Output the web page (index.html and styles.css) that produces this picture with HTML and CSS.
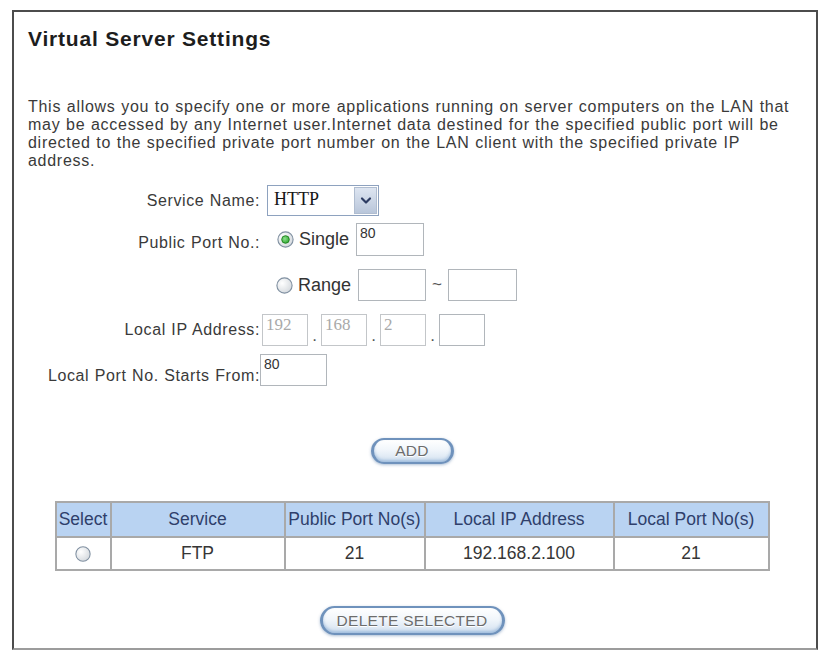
FILE: index.html
```html
<!DOCTYPE html>
<html lang="en">
<head>
<meta charset="utf-8">
<title>Virtual Server Settings</title>
<link rel="stylesheet" href="styles.css">
</head>
<body>
<div class="panel">
  <h1 class="title">Virtual Server Settings</h1>
  <p class="intro">This allows you to specify one or more applications running on server computers on the LAN that<br>may be accessed by any Internet user.Internet data destined for the specified public port will be<br>directed to the specified private port number on the LAN client with the specified private IP<br>address.</p>

  <div class="form">
    <div class="frow r1">
      <div class="lbl">Service Name:</div>
      <div class="select">
        <span class="sel-val">HTTP</span>
        <span class="sel-btn"><svg width="12" height="9" viewBox="0 0 12 9"><path d="M2 2.5 L6 6.5 L10 2.5" fill="none" stroke="#2c3b62" stroke-width="2.2" stroke-linecap="round" stroke-linejoin="round"/></svg></span>
      </div>
    </div>

    <div class="frow r2">
      <div class="lbl lbl-low">Public Port No.:</div>
      <label class="radio">
        <svg width="17" height="17" viewBox="0 0 17 17"><defs><radialGradient id="rgA" cx="35%" cy="35%" r="75%"><stop offset="0" stop-color="#ffffff"/><stop offset="1" stop-color="#d2d7dc"/></radialGradient><radialGradient id="gd" cx="40%" cy="40%" r="70%"><stop offset="0" stop-color="#8ee08e"/><stop offset="1" stop-color="#25a325"/></radialGradient></defs><circle cx="8.5" cy="8.5" r="7.6" fill="url(#rgA)" stroke="#7f8fa0" stroke-width="1.1"/><circle cx="8.5" cy="8.5" r="3.8" fill="url(#gd)" stroke="#1d7f1d" stroke-width="0.9"/></svg>
        <span>Single</span>
      </label>
      <input class="field f-single" type="text" value="80">
    </div>

    <div class="frow r3">
      <div class="lbl"></div>
      <label class="radio radio-b">
        <svg width="17" height="17" viewBox="0 0 17 17"><defs><radialGradient id="rgB" cx="35%" cy="35%" r="75%"><stop offset="0" stop-color="#ffffff"/><stop offset="1" stop-color="#d2d7dc"/></radialGradient></defs><circle cx="8.5" cy="8.5" r="7.6" fill="url(#rgB)" stroke="#7f8fa0" stroke-width="1.1"/></svg>
        <span>Range</span>
      </label>
      <input class="field f-range" type="text" value="">
      <span class="tilde">~</span>
      <input class="field f-range2" type="text" value="">
    </div>

    <div class="frow r4">
      <div class="lbl">Local IP Address:</div>
      <input class="ip ip-first" type="text" value="192" disabled>
      <span class="dot">.</span>
      <input class="ip" type="text" value="168" disabled>
      <span class="dot">.</span>
      <input class="ip" type="text" value="2" disabled>
      <span class="dot">.</span>
      <input class="ip ip-open" type="text" value="">
    </div>

    <div class="frow r5">
      <div class="lbl lbl-bottom">Local Port No. Starts From:</div>
      <input class="field f-local" type="text" value="80">
    </div>
  </div>

  <div class="actions act-add">
    <button class="btn btn-add" type="button">ADD</button>
  </div>

  <table class="vs-table">
    <colgroup>
      <col class="c-sel">
      <col class="c-svc">
      <col class="c-pub">
      <col class="c-ip">
      <col class="c-loc">
    </colgroup>
    <thead>
      <tr>
        <th>Select</th>
        <th>Service</th>
        <th>Public Port No(s)</th>
        <th>Local IP Address</th>
        <th>Local Port No(s)</th>
      </tr>
    </thead>
    <tbody>
      <tr>
        <td><svg class="row-radio" width="16" height="16" viewBox="0 0 17 17"><defs><radialGradient id="rgC" cx="35%" cy="35%" r="75%"><stop offset="0" stop-color="#ffffff"/><stop offset="1" stop-color="#d2d7dc"/></radialGradient></defs><circle cx="8.5" cy="8.5" r="7.6" fill="url(#rgC)" stroke="#7f8fa0" stroke-width="1.1"/></svg></td>
        <td>FTP</td>
        <td>21</td>
        <td>192.168.2.100</td>
        <td>21</td>
      </tr>
    </tbody>
  </table>

  <div class="actions act-del">
    <button class="btn btn-del" type="button">DELETE SELECTED</button>
  </div>
</div>
</body>
</html>
```
FILE: styles.css
```css
* { box-sizing: border-box; }

body {
  margin: 0;
  background: #ffffff;
  font-family: "Liberation Sans", Arial, sans-serif;
  color: #3a3a3a;
}

.panel {
  margin: 10px 0 0 12px;
  width: 806px;
  height: 640px;
  border: 2px solid #4c4c4c;
  border-bottom-color: #9c9c9c;
  padding: 15px 20px 0 14px;
}

.title {
  margin: 0;
  font-size: 21px;
  line-height: 24px;
  font-weight: bold;
  letter-spacing: 0.8px;
  color: #1d1d1d;
}

.intro {
  margin: 47px 0 0;
  font-size: 16px;
  line-height: 18px;
  letter-spacing: 0.72px;
  word-spacing: 0.5px;
  white-space: nowrap;
  color: #3a3a3a;
}

/* form rows */
.form { margin-top: 15px; }

.frow {
  display: flex;
  align-items: center;
}

.lbl {
  flex: none;
  width: 232px;
  text-align: right;
  font-size: 16px;
  line-height: 18px;
  letter-spacing: 0.6px;
  word-spacing: 0.5px;
  color: #3a3a3a;
}

.lbl-low { padding-top: 6px; }
.lbl-bottom { align-self: flex-end; padding-bottom: 1px; }

.r1 { height: 31px; }
.r2 { height: 33px; margin-top: 7px; }
.r3 { height: 32px; margin-top: 13px; }
.r4 { height: 32px; margin-top: 13px; }
.r5 { height: 32px; margin-top: 8px; }

/* select */
.select {
  margin-left: 7px;
  width: 112px;
  height: 31px;
  display: flex;
  border: 1px solid #8ea2bf;
  background: #ffffff;
}

.sel-val {
  flex: 1;
  padding-left: 6px;
  font-family: "Liberation Serif", "Times New Roman", serif;
  font-size: 18px;
  line-height: 26px;
  color: #161616;
}

.sel-btn {
  width: 23px;
  margin: 1px;
  display: flex;
  align-items: center;
  justify-content: center;
  border: 1px solid #b0bdd0;
  background: linear-gradient(#dde5f1, #b9c6da);
}

/* radios */
.radio {
  display: flex;
  align-items: center;
  gap: 5px;
  margin-left: 17px;
  font-size: 18px;
  color: #333333;
}

.radio svg { display: block; }
.radio-b { margin-left: 16px; }

/* text fields */
.field {
  width: 68px;
  height: 33px;
  margin-left: 7px;
  padding: 1px 3px 14px;
  border: 1px solid #b1b6bb;
  background: #ffffff;
  font-family: "Liberation Sans", Arial, sans-serif;
  font-size: 14px;
  color: #333333;
  outline: none;
}

.f-range { height: 32px; }
.f-range2 { height: 32px; width: 69px; margin-left: 0; }
.f-local { height: 32px; width: 67px; margin-left: 0; }

.tilde {
  width: 22px;
  text-align: center;
  font-size: 17px;
  color: #555555;
}

.ip {
  width: 46px;
  height: 32px;
  padding: 1px 3px 12px;
  border: 1px solid #c3c6c9;
  background: #ffffff;
  font-family: "Liberation Serif", "Times New Roman", serif;
  font-size: 17px;
  color: #a9a9a9;
  -webkit-text-fill-color: #a9a9a9;
  outline: none;
}

.ip-first { margin-left: 2px; }
.ip-open { border-color: #b1b6bb; }

.dot {
  width: 13px;
  align-self: flex-end;
  padding-bottom: 2px;
  text-align: center;
  font-size: 17px;
  line-height: 17px;
  color: #555555;
}

/* buttons */
.actions {
  display: flex;
  justify-content: center;
}

.act-add { margin-top: 52px; }
.act-del { margin-top: 35px; }

.btn {
  padding: 0;
  border: 2px solid #6f92bc;
  border-left-width: 3px;
  border-right-width: 3px;
  border-radius: 999px;
  background: linear-gradient(#ffffff 0%, #f1f6fb 45%, #d3e1f0 100%);
  box-shadow: 0 1px 3px rgba(70, 110, 160, 0.45), inset 0 -2px 3px rgba(120, 160, 205, 0.55);
  font-family: "Liberation Sans", Arial, sans-serif;
  font-size: 15.5px;
  letter-spacing: 0.3px;
  color: #6c6c6c;
  text-shadow: 0 1px 0 #ffffff;
}

.btn-add { width: 83px; height: 26px; }
.btn-del { width: 185px; height: 29px; }

/* table */
.vs-table {
  margin: 37px auto 0;
  width: 713px;
  border-collapse: collapse;
  table-layout: fixed;
}

.c-sel { width: 55px; }
.c-svc { width: 174px; }
.c-pub { width: 140px; }
.c-ip { width: 189px; }
.c-loc { width: 155px; }

.vs-table th,
.vs-table td {
  border: 2px solid #a9a9a9;
  padding: 0;
  text-align: center;
  font-size: 17.5px;
}

.vs-table th {
  height: 35px;
  background: #b9d3f2;
  color: #2f3f6b;
  font-weight: normal;
}

.vs-table td {
  height: 33px;
  color: #363636;
}

.row-radio { display: block; margin: 0 auto; }
```
